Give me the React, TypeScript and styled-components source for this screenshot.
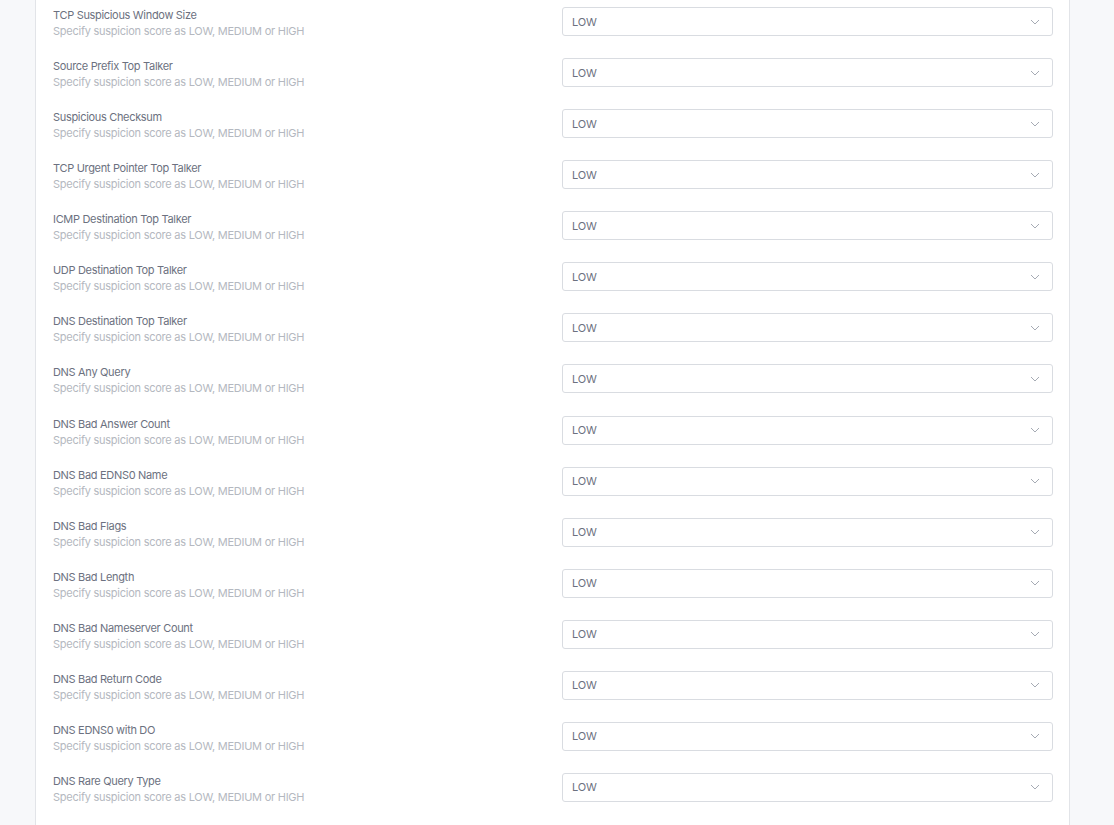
import { FC } from "react";
import styled, { createGlobalStyle } from "styled-components";

const GlobalStyle = createGlobalStyle`
    html, body {
        margin:0;
        padding:0;
        background:#f7f8fa;
        font-family: Inter, "Noto Sans", "Liberation Sans", sans-serif;
    }
`
const Page = styled.div`
    padding:0 44px 0 35px;
    height:825px;
    overflow:hidden;
`
const Card = styled.div`
    background:#fff;
    border-left:1px solid #e2e4e8;
    border-right:1px solid #e2e4e8;
    padding:0 16px 0 17px;
    min-height:825px;
`
const Row = styled.div`
    display:grid;
    grid-template-columns: 1fr 1fr;
    column-gap:18px;
    align-items:start;
    padding:7px 0 12.07px;
`
const Texts = styled.div`
    display:flex;
    flex-direction:column;
`
const Label = styled.div`
    font-size:11px;
    line-height:16px;
    color:#6c7180;
    letter-spacing:-0.32px;
`
const Hint = styled.div`
    font-size:11px;
    line-height:16px;
    color:#b4b8c0;
    letter-spacing:-0.25px;
`
const Select = styled.div`
    height:29px;
    box-sizing:border-box;
    border:1px solid #d9dce1;
    border-radius:3px;
    display:flex;
    align-items:center;
    justify-content:space-between;
    padding:0 12px 0 9px;
    font-size:11px;
    letter-spacing:-0.2px;
    color:#6c7180;
    background:#fff;
`
const Chevron = styled.svg`
    width:10px;
    height:6px;
    flex-shrink:0;
`

const items = [
    "TCP Suspicious Window Size",
    "Source Prefix Top Talker",
    "Suspicious Checksum",
    "TCP Urgent Pointer Top Talker",
    "ICMP Destination Top Talker",
    "UDP Destination Top Talker",
    "DNS Destination Top Talker",
    "DNS Any Query",
    "DNS Bad Answer Count",
    "DNS Bad EDNS0 Name",
    "DNS Bad Flags",
    "DNS Bad Length",
    "DNS Bad Nameserver Count",
    "DNS Bad Return Code",
    "DNS EDNS0 with DO",
    "DNS Rare Query Type",
]

const ScoreRow: FC<{ title: string }> = ({ title }) => (
    <Row>
        <Texts>
            <Label>{title}</Label>
            <Hint>Specify suspicion score as LOW, MEDIUM or HIGH</Hint>
        </Texts>
        <Select>
            <span>LOW</span>
            <Chevron viewBox="0 0 10 6">
                <path d="M1 1l4 4 4-4" fill="none" stroke="#a6abb4" strokeWidth="1" />
            </Chevron>
        </Select>
    </Row>
)

const App: FC = () => (
    <>
        <GlobalStyle />
        <Page>
            <Card>
                {items.map((t) => <ScoreRow key={t} title={t} />)}
            </Card>
        </Page>
    </>
)
export default App
